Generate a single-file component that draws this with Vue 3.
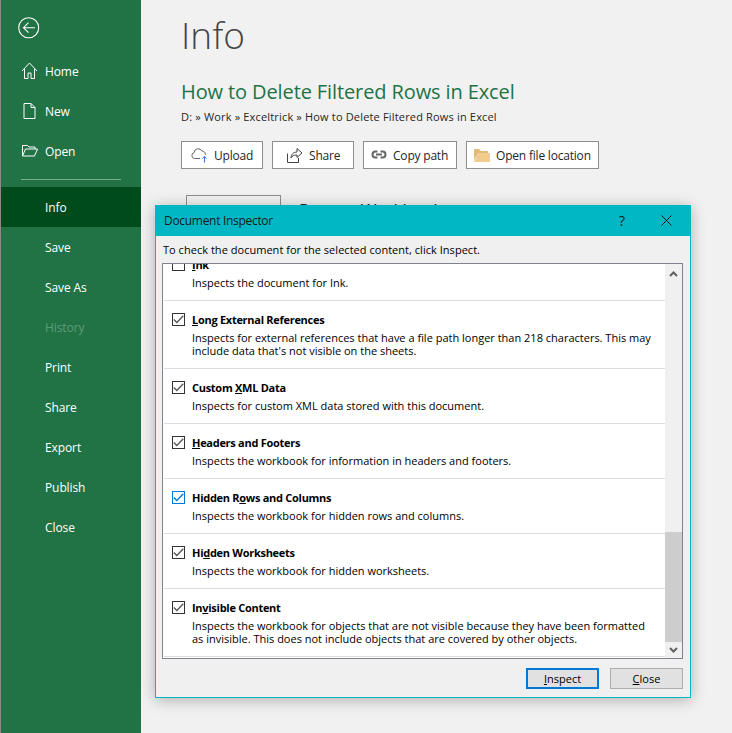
<template>
  <div class="backstage">
    <aside class="sidebar">
      <button class="back-btn" aria-label="Back">
        <svg width="22" height="22" viewBox="0 0 22 22" fill="none" stroke="#fff" stroke-width="1.1">
          <circle cx="10.700" cy="10.700" r="10" />
          <path d="M17 10.700H5.500M10.500 5.700l-5 5 5 5" />
        </svg>
      </button>
      <nav class="nav-top">
        <div v-for="item in topNav" :key="item.label" class="nav-item">
          <svg class="nav-icon" width="17" height="18" viewBox="0 0 17 18" fill="none" stroke="#fff" stroke-width="1">
            <path :d="item.icon" />
          </svg>
          <span>{{ item.label }}</span>
        </div>
      </nav>
      <div class="nav-rule"></div>
      <nav class="nav-bottom">
        <div
          v-for="item in bottomNav"
          :key="item"
          class="nav-item"
          :class="{ active: item === 'Info', disabled: item === 'History' }"
        >
          <span>{{ item }}</span>
        </div>
      </nav>
    </aside>

    <main class="content">
      <h1 class="page-title">Info</h1>
      <h2 class="doc-title">How to Delete Filtered Rows in Excel</h2>
      <div class="doc-path">D: » Work » Exceltrick » How to Delete Filtered Rows in Excel</div>
      <div class="actions">
        <button class="action upload">
          <svg width="18" height="16" viewBox="0 0 18 16" fill="none" stroke="#666">
            <path d="M9 11.500H3.500a3 3 0 0 1-.3-5.900A4 4 0 0 1 10.800 4a3 3 0 0 1 3.400 3.200 2.500 2.500 0 0 1 .8 1" />
            <path d="M13.500 15.500V9.500M11.500 11.500l2-2 2 2" stroke="#2b7cd3" />
          </svg>
          Upload
        </button>
        <button class="action share">
          <svg width="16" height="16" viewBox="0 0 16 16" fill="none" stroke="#444">
            <path d="M.5 6.500v9h11V11" />
            <path d="M4 11c0-4 3-6 6-6V1.500l5 4.500-5 4.500V8c-3 0-5 .5-6 3z" />
          </svg>
          Share
        </button>
        <button class="action copy">
          <svg width="16" height="10" viewBox="0 0 16 10" fill="none" stroke="#666" stroke-width="2">
            <path d="M6.500 1.500H4.500a3 3 0 0 0 0 6h2M9.500 1.500h2a3 3 0 0 1 0 6h-2M5 4.500h6" />
          </svg>
          Copy path
        </button>
        <button class="action open">
          <svg width="16" height="13" viewBox="0 0 16 13">
            <path d="M0 1a1 1 0 0 1 1-1h4l2 2h7v2H4L0 11z" fill="#e3bb76" />
            <path d="M0 13l3.500-9H16v9z" fill="#f0cd8c" />
          </svg>
          Open file location
        </button>
      </div>
      <div class="protect">
        <div class="protect-box"></div>
        <div class="protect-title">Protect Workbook</div>
      </div>
    </main>

    <section class="dialog">
      <header class="dialog-head">
        <span class="dialog-title">Document Inspector</span>
        <span class="help">?</span>
        <svg class="close-x" width="11" height="11" viewBox="0 0 11 11" stroke="#111" fill="none">
          <path d="M.5.500l10 10M10.500.500l-10 10" />
        </svg>
      </header>
      <div class="dialog-body">
        <p class="hint">To check the document for the selected content, click Inspect.</p>
        <div class="list-box">
          <div class="list-view">
            <div class="list-rows">
              <div v-for="row in rows" :key="row.pre + row.key" class="row" :style="{ height: row.h + 'px' }">
                <span class="check" :class="{ focused: row.focused }">
                  <svg v-if="row.checked" width="11" height="9" viewBox="0 0 11 9" fill="none" stroke-width="1.300">
                    <path d="M.8 4.500l3 3L10.300.8" />
                  </svg>
                </span>
                <div class="row-text">
                  <div class="row-title">{{ row.pre }}<u>{{ row.key }}</u>{{ row.post }}</div>
                  <div class="row-desc">
                    <div v-for="line in row.desc" :key="line">{{ line }}</div>
                  </div>
                </div>
              </div>
            </div>
          </div>
          <div class="scrollbar">
            <svg width="9" height="6" viewBox="0 0 9 6" fill="none" stroke="#606060" stroke-width="2">
              <path d="M1 5l3.500-3.500L8 5" />
            </svg>
            <div class="track"><div class="thumb"></div></div>
            <svg width="9" height="6" viewBox="0 0 9 6" fill="none" stroke="#606060" stroke-width="2">
              <path d="M1 1l3.500 3.500L8 1" />
            </svg>
          </div>
        </div>
        <footer class="dialog-foot">
          <button class="dlg-btn primary"><u>I</u>nspect</button>
          <button class="dlg-btn"><u>C</u>lose</button>
        </footer>
      </div>
    </section>
  </div>
</template>

<script setup>
const topNav = [
  { label: 'Home', icon: 'M1 9l7.500-8 7.500 8M3.500 7V16.500H7V11h3v5.500h3.500V7' },
  { label: 'New', icon: 'M3 1.500h7l4 4v11H3zM10 1.500v4h4' },
  { label: 'Open', icon: 'M1.500 14V3.500h5L8 5h6v2M1.500 14l3-7h12l-3 7z' }
]
const bottomNav = ['Info', 'Save', 'Save As', 'History', 'Print', 'Share', 'Export', 'Publish', 'Close']

const rows = [
  { pre: '', key: 'I', post: 'nk', checked: false, h: 55, desc: ['Inspects the document for Ink.'] },
  {
    pre: '',
    key: 'L',
    post: 'ong External References',
    checked: true,
    h: 68,
    desc: [
      'Inspects for external references that have a file path longer than 218 characters. This may',
      "include data that's not visible on the sheets."
    ]
  },
  { pre: 'Custom ', key: 'X', post: 'ML Data', checked: true, h: 55, desc: ['Inspects for custom XML data stored with this document.'] },
  { pre: '', key: 'H', post: 'eaders and Footers', checked: true, h: 55, desc: ['Inspects the workbook for information in headers and footers.'] },
  { pre: 'Hidden R', key: 'o', post: 'ws and Columns', checked: true, focused: true, h: 55, desc: ['Inspects the workbook for hidden rows and columns.'] },
  { pre: 'Hi', key: 'd', post: 'den Worksheets', checked: true, h: 55, desc: ['Inspects the workbook for hidden worksheets.'] },
  {
    pre: 'In',
    key: 'v',
    post: 'isible Content',
    checked: true,
    h: 68,
    desc: [
      'Inspects the workbook for objects that are not visible because they have been formatted',
      'as invisible. This does not include objects that are covered by other objects.'
    ]
  }
]
</script>

<style>
html,
body {
  margin: 0;
  background: #f1f1f1;
}
</style>

<style scoped>
.backstage {
  position: relative;
  display: flex;
  width: 732px;
  height: 733px;
  overflow: hidden;
  background: #f1f1f1;
  color: #262626;
  font-family: "Open Sans", "Noto Sans", sans-serif;
}

.sidebar {
  flex: none;
  width: 140px;
  border-left: 1px solid #8a8a8a;
  background: #217346;
  color: #fff;
  font-size: 12px;
  letter-spacing: -0.1px;
}

.back-btn {
  display: block;
  margin: 17px 0 0 17px;
  padding: 0;
  width: 22px;
  height: 22px;
  border: none;
  background: none;
}

.nav-top {
  margin-top: 12px;
}

.nav-item {
  position: relative;
  display: flex;
  align-items: center;
  height: 40px;
  padding-left: 44px;
}

.nav-icon {
  position: absolute;
  left: 20px;
  top: 11px;
}

.nav-rule {
  height: 1px;
  margin: 8px 20px 7px 20px;
  background: #79ab90;
}

.nav-item.active {
  background: #004b1c;
}

.nav-item.disabled {
  color: #5d9b79;
}

.content {
  flex: 1;
  padding: 12px 0 0 40px;
}

.page-title {
  margin: 0;
  font-size: 37px;
  font-weight: 300;
  line-height: 46px;
  color: #444;
}

.doc-title {
  margin: 20px 0 0;
  font-size: 20px;
  font-weight: 400;
  line-height: 28px;
  letter-spacing: -0.11px;
  color: #217346;
}

.doc-path {
  margin-top: 3px;
  font-size: 11px;
  line-height: 16px;
  letter-spacing: 0.17px;
}

.actions {
  display: flex;
  gap: 9px;
  margin-top: 16px;
}

.action {
  display: flex;
  align-items: center;
  gap: 7px;
  height: 28px;
  box-sizing: border-box;
  padding: 0;
  border: 1px solid #8e8e8e;
  background: #fff;
  color: #262626;
  font-family: inherit;
  font-size: 12px;
  letter-spacing: -0.2px;
}

.upload {
  width: 82px;
  padding-left: 9px;
  gap: 5px;
}

.share {
  width: 82px;
  padding-left: 14px;
  gap: 6px;
}

.copy {
  width: 94px;
  padding-left: 7px;
  gap: 6px;
}

.open {
  width: 133px;
  padding-left: 7px;
  gap: 6px;
}

.protect {
  display: flex;
  margin: 26px 0 0 5px;
}

.protect-box {
  width: 93px;
  height: 60px;
  border: 1px solid #8e8e8e;
  background: #f1f1f1;
}

.protect-title {
  margin: 5px 0 0 18px;
  font-size: 17px;
  line-height: 20px;
}

.dialog {
  position: absolute;
  left: 155px;
  top: 205px;
  width: 536px;
  height: 493px;
  box-sizing: border-box;
  border: 1px solid #00b7c3;
  border-top: none;
  background: #f0f0f0;
  box-shadow: 0 2px 14px rgba(0, 0, 0, 0.28);
  display: flex;
  flex-direction: column;
  color: #000;
}

.dialog-head {
  flex: none;
  display: flex;
  align-items: center;
  height: 31px;
  margin: 0 -1px;
  padding: 0 19px 0 9px;
  background: #00b7c3;
  font-size: 12px;
  color: #1a1a1a;
}

.dialog-title {
  flex: 1;
  letter-spacing: -0.3px;
}

.help {
  margin-right: 36px;
  font-size: 14px;
}

.dialog-body {
  flex: 1;
  display: flex;
  flex-direction: column;
  padding: 0 6px 0 6px;
  min-height: 0;
}

.hint {
  margin: 0 0 0 1px;
  padding-top: 6px;
  font-size: 11px;
  line-height: 15px;
  height: 21px;
  letter-spacing: 0.03px;
}

.list-box {
  display: flex;
  height: 396px;
  margin-right: 1px;
  box-sizing: border-box;
  border: 1px solid #82828c;
  background: #fff;
}

.list-view {
  flex: 1;
  overflow: hidden;
  padding-left: 1px;
}

.list-rows {
  margin-top: -18px;
}

.row {
  display: flex;
  box-sizing: border-box;
  padding: 12px 0 0 8px;
  border-bottom: 1px solid #dcdcdc;
}

.check {
  flex: none;
  display: flex;
  align-items: center;
  justify-content: center;
  width: 13px;
  height: 13px;
  box-sizing: border-box;
  border: 1px solid #333;
  background: #fff;
}

.check svg {
  stroke: #555;
}

.check.focused {
  border-color: #0078d7;
}

.check.focused svg {
  stroke: #0078d7;
}

.row-text {
  margin-left: 7px;
  font-size: 11px;
  line-height: 13px;
}

.row-title {
  font-weight: 700;
  line-height: 14px;
  letter-spacing: -0.28px;
}

.row-desc {
  margin-top: 4px;
}

.scrollbar {
  flex: none;
  width: 17px;
  display: flex;
  flex-direction: column;
  align-items: center;
  background: #f0f0f0;
  padding: 7px 0 5px;
  box-sizing: border-box;
  gap: 5px;
}

.track {
  flex: 1;
  width: 100%;
  display: flex;
  flex-direction: column;
  justify-content: flex-end;
}

.thumb {
  height: 110px;
  background: #cdcdcd;
}

.dialog-foot {
  display: flex;
  justify-content: flex-end;
  gap: 11px;
  margin: 9px 1px 0 0;
}

.dlg-btn {
  width: 73px;
  height: 21px;
  box-sizing: border-box;
  padding: 0;
  border: 1px solid #adadad;
  background: #e1e1e1;
  font-family: inherit;
  font-size: 11px;
  color: #000;
}

.dlg-btn.primary {
  border: 2px solid #0078d7;
}
</style>
